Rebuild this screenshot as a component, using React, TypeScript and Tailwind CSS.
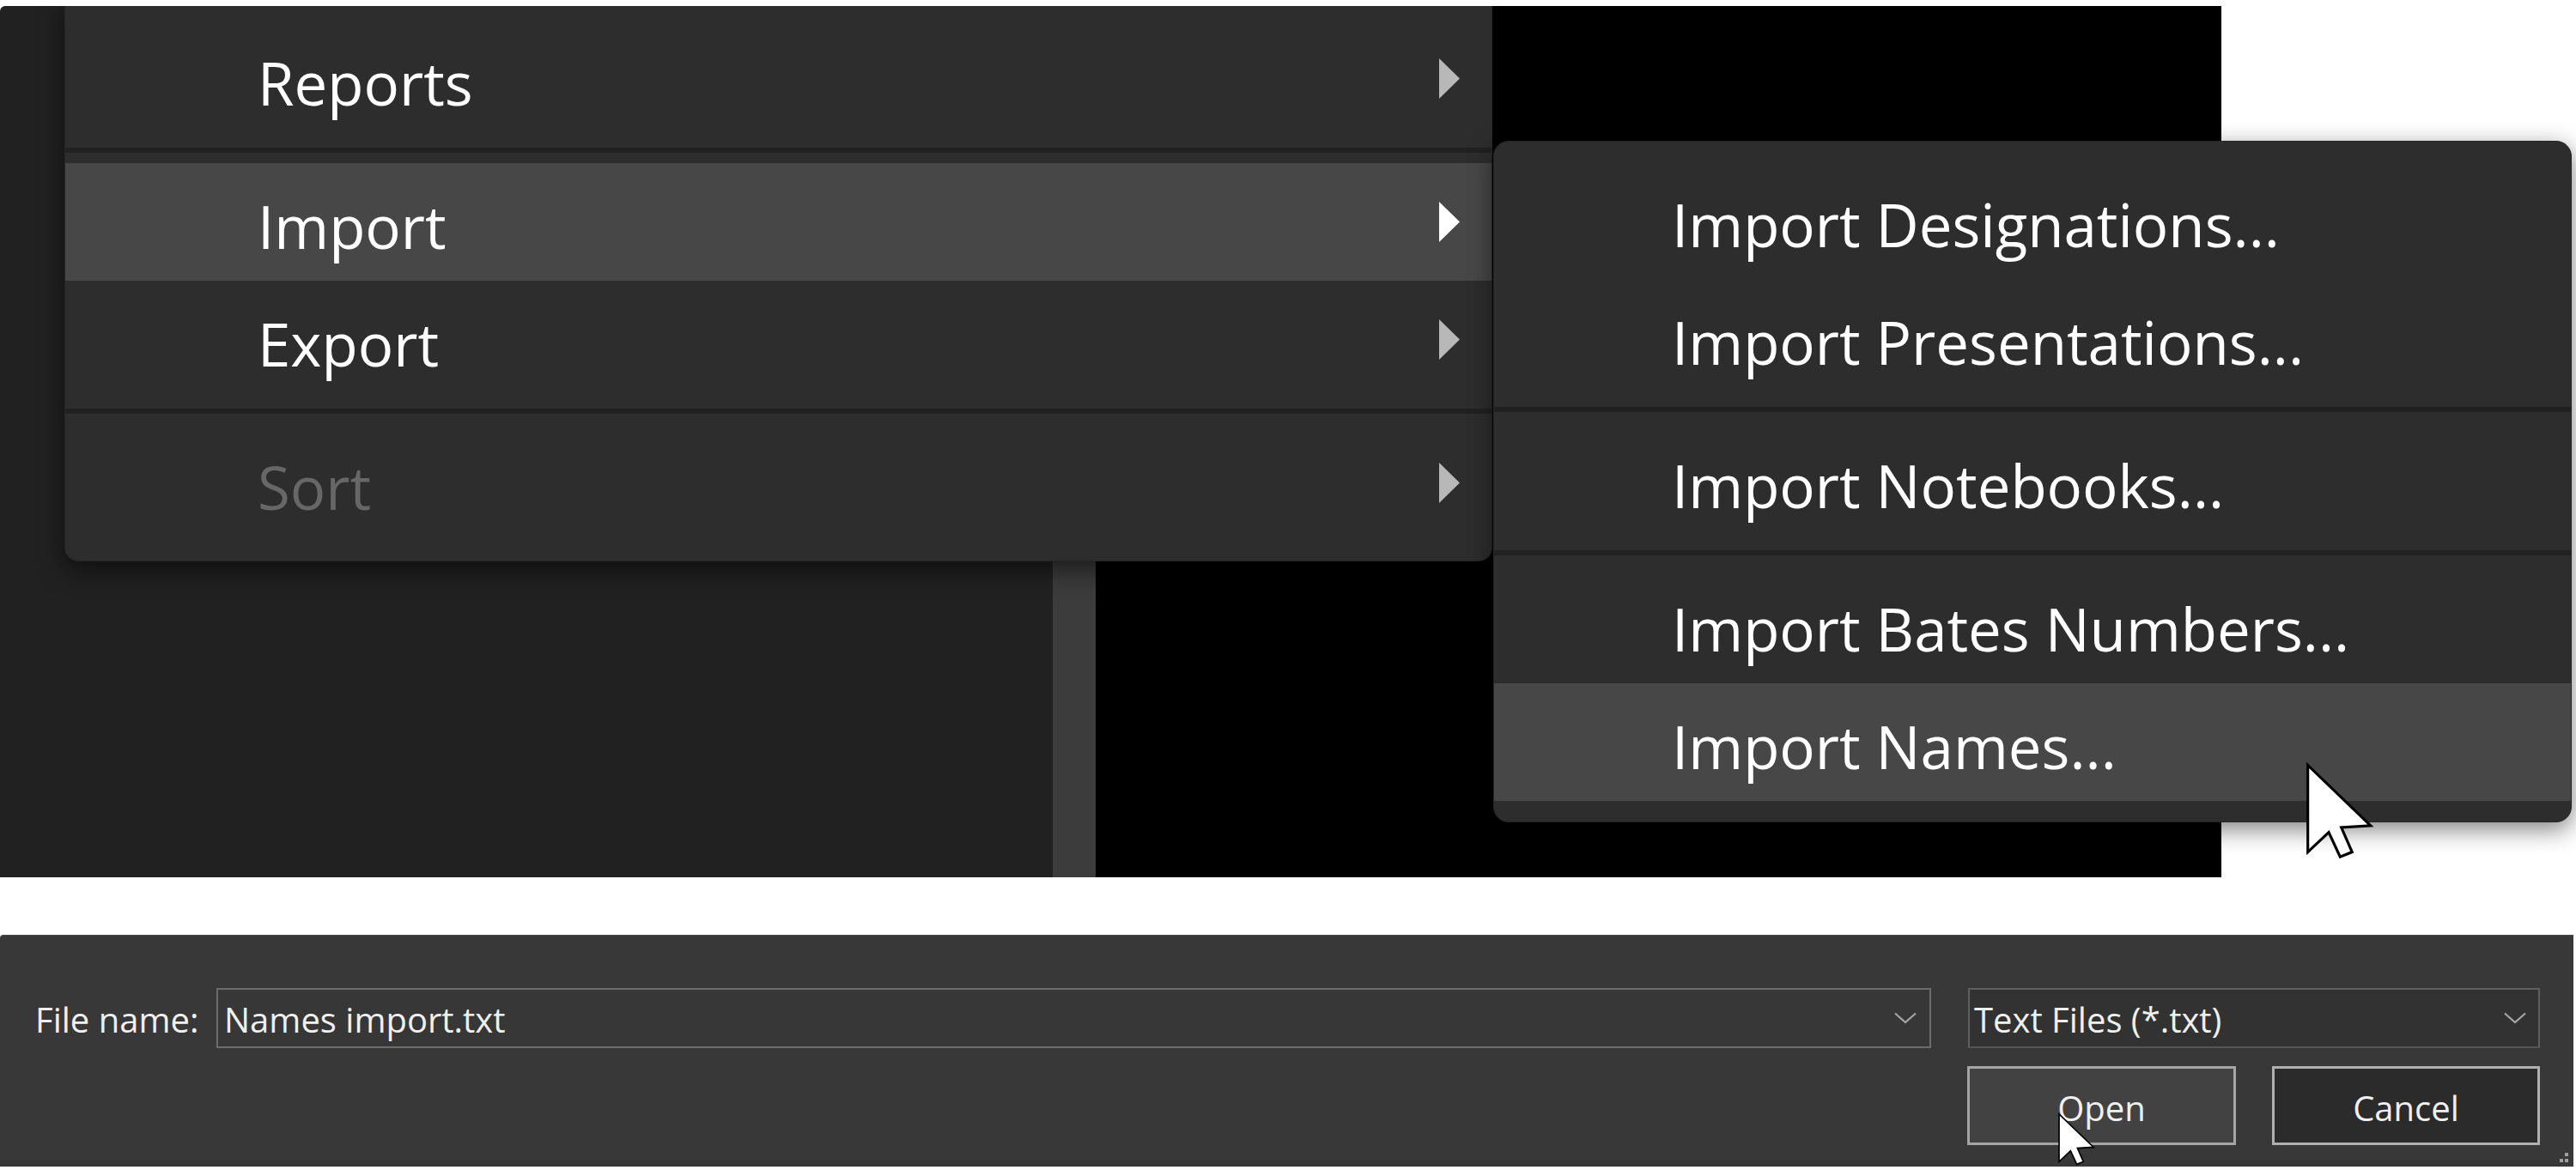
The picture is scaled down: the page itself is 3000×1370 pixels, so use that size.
import React from 'react';

type Row = { label: string; active?: boolean; disabled?: boolean } | 'sep';

const mainRows: Row[] = [
  { label: 'Reports' },
  'sep',
  { label: 'Import', active: true },
  { label: 'Export' },
  'sep',
  { label: 'Sort', disabled: true },
];

const subRows: Row[] = [
  { label: 'Import Designations...' },
  { label: 'Import Presentations...' },
  'sep',
  { label: 'Import Notebooks...' },
  'sep',
  { label: 'Import Bates Numbers...' },
  { label: 'Import Names...', active: true },
];

const Separator = () => (
  <div className="h-[30px] pt-[12px]">
    <div className="h-[6px] bg-[#212121]" />
  </div>
);

const SubArrow = ({ bright }: { bright?: boolean }) => (
  <svg width="24" height="47" viewBox="0 0 24 47">
    <polygon points="0,0 24,23.5 0,47" fill={bright ? '#ffffff' : '#b8b8b8'} />
  </svg>
);

const Chevron = () => (
  <svg width="26" height="14" viewBox="0 0 26 14">
    <polyline points="1,1.5 13,12 25,1.5" fill="none" stroke="#a6a6a6" strokeWidth="2.2" />
  </svg>
);

const Cursor = ({ w, h }: { w: number; h: number }) => (
  <svg width={w} height={h} viewBox="0 0 12 16.5">
    <path
      d="M0.5 0.5 L0.5 15 L4 11.7 L5.9 15.8 L7.9 15 L6.1 10.9 L11 10.6 Z"
      fill="#ffffff"
      stroke="#000000"
      strokeWidth="0.45"
      strokeLinejoin="miter"
    />
  </svg>
);

const MenuRows = ({ rows, indent, arrows }: { rows: Row[]; indent: string; arrows?: boolean }) => (
  <>
    {rows.map((r, i) =>
      r === 'sep' ? (
        <Separator key={i} />
      ) : (
        <div
          key={i}
          className={`h-[137px] flex items-center justify-between pr-[37px] ${indent} ${r.active ? 'bg-[#474747]' : ''}`}
        >
          <span className={`mt-[9px] text-[69px] leading-none ${r.disabled ? 'text-[#676767]' : 'text-white'}`}>
            {r.label}
          </span>
          {arrows && <SubArrow bright={r.active} />}
        </div>
      )
    )}
  </>
);

export default function App() {
  return (
    <div className="relative w-[3000px] h-[1370px] bg-white overflow-hidden font-['Open_Sans',sans-serif]">
      {/* app window behind the menus */}
      <div className="relative mt-[7px] w-[2587px] h-[1015px] flex overflow-hidden rounded-tl-[6px]">
        <div className="w-[1226px] bg-[#212121]" />
        <div className="w-[50px] bg-[#3c3c3c]" />
        <div className="flex-1 bg-black" />

        <div className="absolute left-[75px] top-[-8px] w-[1663px] h-[655px] bg-[#2d2d2d] rounded-b-[16px] pt-[23px] shadow-[0_10px_30px_rgba(0,0,0,0.55)] border border-[#262626]">
          <MenuRows rows={mainRows} indent="pl-[224px]" arrows />
        </div>
      </div>

      {/* submenu */}
      <div className="absolute left-[1739px] top-[164px] w-[1256px] h-[794px] bg-[#2d2d2d] rounded-[18px] pt-[23px] overflow-hidden shadow-[0_8px_28px_rgba(0,0,0,0.5)] border border-[#262626]">
        <MenuRows rows={subRows} indent="pl-[207px]" />
      </div>

      {/* file dialog footer */}
      <div className="relative mt-[67px] w-[2997px] h-[270px] bg-[#383838] border-t border-[#474747] rounded-tl-[4px] pt-[61px] pl-[41px] pr-[39px] text-[#f0f0f0] text-[40px] leading-none">
        <div className="flex items-center h-[70px]">
          <span className="w-[211px] mt-[4px]">File name:</span>
          <div className="w-[1997px] h-[70px] border-2 border-[#6c6c6c] bg-[#373737] flex items-center justify-between pl-[7px] pr-[15px]">
            <span className="mt-[4px]">Names import.txt</span>
            <Chevron />
          </div>
          <div className="ml-[43px] w-[666px] h-[70px] border-2 border-[#5f5f5f] border-b-[#545454] bg-[#323232] flex items-center justify-between pl-[5px] pr-[14px]">
            <span className="mt-[4px]">Text Files (*.txt)</span>
            <Chevron />
          </div>
        </div>
        <div className="flex justify-end gap-[42px] mt-[21px]">
          <div className="w-[313px] h-[92px] border-[3px] border-[#a5a5a5] bg-[#424242] flex items-center justify-center pt-[6px]">
            Open
          </div>
          <div className="w-[312px] h-[92px] border-[3px] border-[#b0b0b0] bg-[#2b2b2b] flex items-center justify-center pt-[6px]">
            Cancel
          </div>
        </div>
        <svg className="absolute right-[4px] bottom-[2px]" width="18" height="18" viewBox="0 0 18 18">
          <rect x="12" y="4" width="4" height="4" fill="#a0a0a0" />
          <rect x="6" y="11" width="4" height="4" fill="#a0a0a0" />
          <rect x="12" y="11" width="4" height="4" fill="#a0a0a0" />
        </svg>
      </div>

      {/* mouse pointers */}
      <div className="absolute left-[2684px] top-[888px]">
        <Cursor w={84} h={115} />
      </div>
      <div className="absolute left-[2396px] top-[1296px]">
        <Cursor w={46} h={63} />
      </div>
    </div>
  );
}
